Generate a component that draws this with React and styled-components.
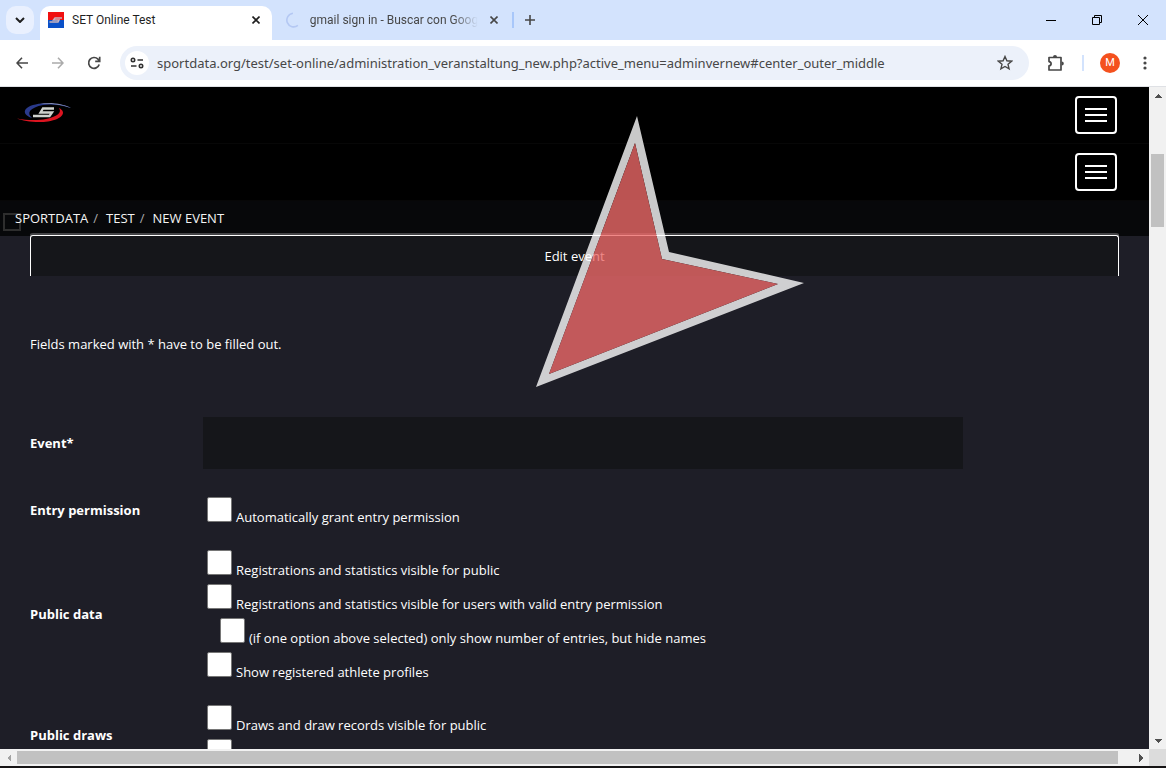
import React from 'react';
import styled, { createGlobalStyle } from 'styled-components';

const GlobalStyle = createGlobalStyle`
  * {
    box-sizing: border-box;
  }

  body {
    margin: 0;
    overflow: hidden;
    font-family: 'Open Sans', 'Noto Sans', sans-serif;
    font-size: 13px;
    color: #fff;
  }

  button {
    padding: 0;
    border: none;
    background: none;
    color: inherit;
    font: inherit;
  }
`;

const Window = styled.div`
  display: flex;
  flex-direction: column;
  height: 100vh;
  background: #161415;
`;

/* Browser chrome */

const TabStrip = styled.div`
  display: flex;
  align-items: flex-end;
  height: 40px;
  background: #d3e3fd;
  color: #1f1f1f;
  font-family: Roboto, 'Open Sans', sans-serif;
  font-size: 12px;
`;

const TabSearch = styled.button`
  display: flex;
  align-items: center;
  justify-content: center;
  width: 28px;
  height: 28px;
  margin: 0 6px 6px;
  border-radius: 10px;
  background: #e9f0fe;
`;

const Tab = styled.div`
  display: flex;
  align-items: center;
  gap: 8px;
  width: ${(props) => (props.$active ? '232px' : '240px')};
  height: 34px;
  padding: ${(props) => (props.$active ? '0 8px 6px 8px' : '0 10px 6px 14px')};
  border-radius: 10px 10px 0 0;
  background: ${(props) => (props.$active ? '#fff' : 'transparent')};
  color: ${(props) => (props.$active ? '#1f1f1f' : '#474747')};
`;

const TabTitle = styled.span`
  flex: 1;
  white-space: nowrap;
  line-height: 16px;
  mask-image: ${(props) => (props.$fade ? 'linear-gradient(90deg, #000 85%, transparent)' : 'none')};
`;

const IconButton = styled.button`
  display: flex;
  align-items: center;
  justify-content: center;
  width: ${(props) => props.$size || 16}px;
  height: ${(props) => props.$size || 16}px;
`;

const TabDivider = styled.div`
  width: 2px;
  height: 16px;
  margin-bottom: 12px;
  background: #a8c7fa;
`;

const NewTab = styled(IconButton)`
  margin: 0 0 12px 8px;
`;

const WindowControls = styled.div`
  display: flex;
  margin-left: auto;
`;

const WindowControl = styled.button`
  display: flex;
  align-items: center;
  justify-content: center;
  width: 46px;
  height: 40px;
`;

const Toolbar = styled.div`
  display: flex;
  align-items: center;
  height: 47px;
  padding: 0 14px 0 11px;
  border-bottom: 1px solid #dfe1e5;
  background: #fff;
  color: #474747;
`;

const NavButtons = styled.div`
  display: flex;
  gap: 14px;
`;

const AddressBar = styled.div`
  display: flex;
  flex: 1;
  align-items: center;
  gap: 8px;
  height: 34px;
  margin: 0 16px 0 15px;
  padding: 0 12px 0 5px;
  border-radius: 17px;
  background: #ecf1fa;
`;

const SiteInfo = styled(IconButton)`
  border-radius: 50%;
  background: #fff;
`;

const Url = styled.input`
  flex: 1;
  min-width: 0;
  padding: 0;
  border: none;
  outline: none;
  background: transparent;
  color: #474747;
  font: 13px 'Noto Sans', 'Open Sans', sans-serif;
`;

const ToolbarDivider = styled.div`
  width: 2px;
  height: 16px;
  margin: 0 16px 0 15px;
  background: #d3e3fd;
`;

const Avatar = styled.button`
  width: 20px;
  height: 20px;
  margin-right: 18px;
  border-radius: 50%;
  background: #f4511e;
  color: #fff;
  font: 11px/20px Roboto, sans-serif;
`;

/* Scrollable area */

const Viewport = styled.div`
  display: grid;
  flex: 1;
  grid-template-columns: 1fr 17px;
  grid-template-rows: 1fr 17px;
  min-height: 0;
  margin-bottom: 2px;
`;

const Page = styled.main`
  position: relative;
  min-height: 0;
  overflow: hidden;
  background: #1e1e27;
`;

const ScrollBar = styled.div`
  display: flex;
  flex-direction: ${(props) => (props.$horizontal ? 'row' : 'column')};
  align-items: center;
  background: #f1f1f1;
`;

const ScrollArrow = styled.button`
  display: flex;
  align-items: center;
  justify-content: center;
  width: 17px;
  height: 17px;
`;

const ScrollTrack = styled.div`
  display: flex;
  flex: 1;
  flex-direction: ${(props) => (props.$horizontal ? 'row' : 'column')};
  align-self: stretch;
  padding: ${(props) => (props.$horizontal ? '2px 0' : '50px 2px 0')};
`;

const ScrollThumb = styled.div`
  flex: ${(props) => props.$size};
  background: #c1c1c1;
`;

const ScrollCorner = styled.div`
  background: #dcdcdc;
`;

/* Page */

const HeaderRow = styled.header`
  display: flex;
  align-items: center;
  justify-content: space-between;
  height: 57px;
  padding: 0 32px 0 16px;
  border-bottom: 1px solid #070707;
  background: #000;
`;

const Logo = styled.a`
  display: flex;
  margin-bottom: 4px;
`;

const MenuButton = styled.button`
  display: flex;
  flex-direction: column;
  align-items: center;
  justify-content: center;
  gap: 4px;
  width: 42px;
  height: 38px;
  margin-left: auto;
  border: 2px solid #fff;
  border-radius: 4px;
`;

const MenuLine = styled.span`
  width: 22px;
  height: 2px;
  background: #fff;
`;

const Breadcrumb = styled.nav`
  position: relative;
  display: flex;
  height: 35px;
  padding: 0 15px;
  background: #07080a;
  line-height: 34px;
  font-weight: 500;
  text-transform: uppercase;
`;

const Crumb = styled.a`
  z-index: 1;
  color: #f4f4f4;
  text-decoration: none;

  & + &::before {
    content: '/';
    padding: 0 8px 0 5px;
    color: #aaa;
  }
`;

const CrumbBox = styled.span`
  position: absolute;
  top: 12px;
  left: 3px;
  width: 18px;
  height: 18px;
  border: 2px solid #2e2e2e;
`;

const Content = styled.div`
  padding: 0 30px;
`;

const EditTab = styled.button`
  display: block;
  width: 100%;
  height: 41px;
  margin-top: -1px;
  border: 1px solid #fff;
  border-bottom: none;
  border-radius: 3px 3px 0 0;
  background: #15161a;
  box-shadow: 0 -1px 0 1px #444447;
  clip-path: inset(-2px 0 0 0);
  color: #fff;
`;

const Notice = styled.p`
  margin: 58px 0 63px;
  line-height: 20px;
`;

const EventForm = styled.form`
  display: flex;
  flex-direction: column;
  gap: 28px;
`;

const Field = styled.div`
  display: grid;
  grid-template-columns: 173px 1fr;
  align-items: center;
`;

const FieldLabel = styled.label`
  font-weight: 700;
  line-height: 20px;
`;

const TextInput = styled.input`
  width: 83%;
  height: 52px;
  padding: 0 16px;
  border: none;
  background: #15161a;
  color: #fff;
  font: inherit;
`;

const Options = styled.div`
  display: flex;
  flex-direction: column;
  gap: 9px;
  padding-left: 4px;
`;

const Option = styled.label`
  display: flex;
  align-items: baseline;
  gap: 4px;
  height: 25px;
  padding-left: ${(props) => (props.$nested ? '13px' : '0')};
  line-height: 18px;
`;

const Checkbox = styled.input`
  appearance: none;
  flex: none;
  width: 25px;
  height: 25px;
  margin: 0;
  border: 1px solid #767676;
  border-radius: 2px;
  background: #fff;
`;

const Pointer = styled.svg`
  position: absolute;
  top: 28px;
  left: calc(50% - 40px);
  opacity: 0.79;
  pointer-events: none;
`;

const CloseIcon = () => (
  <svg width="8" height="8" viewBox="0 0 8 8" stroke="currentColor" strokeWidth="1.6">
    <path d="M.5 .5l7 7M7.500 .5l-7 7" />
  </svg>
);

const Favicon = () => (
  <svg width="16" height="16" viewBox="0 0 16 16">
    <path fill="#f01010" d="M0 0h16v8H0z" />
    <path fill="#0a50c8" d="M0 8h16v8H0z" />
    <path d="M14 6H7L5.500 8H11l-1 2H1.500" fill="none" stroke="#c9b4bf" strokeWidth="1.5" />
  </svg>
);

const SportdataLogo = () => (
  <svg width="56" height="22" viewBox="0 0 56 22">
    <path fill="#2a3a8c" d="M16 16C4 12 7 3 26 1.500C38 0.500 50 3 55 6C44 2.500 34 1.700 27 3C14 5.500 10 11 16 16Z" />
    <path fill="#8b94b8" d="M24 1.600C36 0 49 2.500 55 6C45 2.500 35 1.500 24 1.600Z" />
    <path fill="#dc1420" d="M43 6C51 10 47 17 32 19.500C20 21 7 19 1 16.500C11 18.500 22 18.500 30 17C42 14.500 46 10.500 43 6Z" />
    <path fill="none" stroke="#cfd2ce" strokeWidth="2.300" d="M38 6.500H27L24.500 10.500H36L33.500 14H17" />
  </svg>
);

const arrowPaths = {
  up: 'M0 4L4 0L8 4Z',
  down: 'M0 0L4 4L8 0Z',
  left: 'M4 0L0 4L4 8Z',
  right: 'M0 0L4 4L0 8Z',
};

const Arrow = ({ direction, color = '#505050' }) => {
  const vertical = direction === 'up' || direction === 'down';
  return (
    <svg width={vertical ? 8 : 4} height={vertical ? 4 : 8} fill={color} shapeRendering="crispEdges">
      <path d={arrowPaths[direction]} />
    </svg>
  );
};

const BrowserTabs = () => (
  <TabStrip>
    <TabSearch aria-label="Search tabs">
      <svg width="10" height="6" viewBox="0 0 10 6" fill="none" stroke="currentColor" strokeWidth="2">
        <path d="M1 1l4 4 4-4" />
      </svg>
    </TabSearch>
    <Tab $active>
      <Favicon />
      <TabTitle>SET Online Test</TabTitle>
      <IconButton aria-label="Close tab"><CloseIcon /></IconButton>
    </Tab>
    <Tab>
      <svg width="16" height="16" viewBox="0 0 16 16" fill="none" stroke="#b4c8f3" strokeWidth="1.6">
        <path d="M7 1.200A6.900 6.900 0 1 0 12 13.500" />
      </svg>
      <TabTitle $fade>gmail sign in - Buscar con Goog</TabTitle>
      <IconButton aria-label="Close tab"><CloseIcon /></IconButton>
    </Tab>
    <TabDivider />
    <NewTab aria-label="New tab">
      <svg width="10" height="10" viewBox="0 0 10 10" stroke="#474747" strokeWidth="1.6">
        <path d="M5 0v10M0 5h10" />
      </svg>
    </NewTab>
    <WindowControls>
      <WindowControl aria-label="Minimize">
        <svg width="10" height="10" stroke="#000"><path d="M0 5.500h10" /></svg>
      </WindowControl>
      <WindowControl aria-label="Restore">
        <svg width="10" height="10" fill="none" stroke="#000">
          <path d="M.5 2.500h7v7h-7zM2.500 2.500v-2h7v7h-2" />
        </svg>
      </WindowControl>
      <WindowControl aria-label="Close">
        <svg width="10" height="10" stroke="#000"><path d="M0 0l10 10M10 0L0 10" /></svg>
      </WindowControl>
    </WindowControls>
  </TabStrip>
);

const BrowserToolbar = () => (
  <Toolbar>
    <NavButtons>
      <IconButton $size={22} aria-label="Back">
        <svg width="12" height="12" viewBox="0 0 12 12" fill="none" stroke="#474747" strokeWidth="1.6">
          <path d="M12 6H1M6 .8L1 6l5 5.200" />
        </svg>
      </IconButton>
      <IconButton $size={22} aria-label="Forward">
        <svg width="12" height="12" viewBox="0 0 12 12" fill="none" stroke="#ababab" strokeWidth="1.6">
          <path d="M0 6h11M6 .8L11 6l-5 5.200" />
        </svg>
      </IconButton>
      <IconButton $size={22} aria-label="Reload">
        <svg width="14" height="14" viewBox="0 0 14 14" fill="none" stroke="#474747" strokeWidth="1.7">
          <path d="M12.200 8.500A5.400 5.400 0 1 1 11 3.200L12.500 5M12.700 .8V5.300H8.200" />
        </svg>
      </IconButton>
    </NavButtons>
    <AddressBar>
      <SiteInfo $size={24} aria-label="Site information">
        <svg width="14" height="12" viewBox="0 0 14 12" fill="none" stroke="#303030" strokeWidth="1.6">
          <circle cx="3" cy="3" r="1.700" />
          <path d="M7.500 3H13M1 9h5.500" />
          <circle cx="11" cy="9" r="1.700" />
        </svg>
      </SiteInfo>
      <Url
        aria-label="Address"
        defaultValue="sportdata.org/test/set-online/administration_veranstaltung_new.php?active_menu=adminvernew#center_outer_middle"
      />
      <IconButton $size={24} aria-label="Bookmark this page">
        <svg width="16" height="16" viewBox="0 0 16 16" fill="none" stroke="#474747" strokeWidth="1.4">
          <path d="M8 1.500l1.900 4.300 4.700.4-3.600 3.100 1.100 4.600L8 11.500l-4.100 2.400L5 9.300 1.400 6.200l4.700-.4z" />
        </svg>
      </IconButton>
    </AddressBar>
    <IconButton $size={22} aria-label="Extensions">
      <svg width="18" height="18" viewBox="0 0 18 18" fill="none" stroke="#474747" strokeWidth="1.7">
        <path d="M2 3.500h12V16H2v-4.200c2.800-.3 2.800-3.900 0-4.200z" strokeLinejoin="round" />
        <path d="M6 3a2 2 0 0 1 4 0zM14.800 7.600a2 2 0 0 1 0 4z" fill="#474747" stroke="none" />
      </svg>
    </IconButton>
    <ToolbarDivider />
    <Avatar>M</Avatar>
    <IconButton $size={14} aria-label="More">
      <svg width="4" height="14" fill="#474747">
        <circle cx="2" cy="2" r="1.600" />
        <circle cx="2" cy="7" r="1.600" />
        <circle cx="2" cy="12" r="1.600" />
      </svg>
    </IconButton>
  </Toolbar>
);

const Hamburger = ({ label }) => (
  <MenuButton aria-label={label}>
    <MenuLine />
    <MenuLine />
    <MenuLine />
  </MenuButton>
);

const CheckOption = ({ nested, children, ...rest }) => (
  <Option $nested={nested}>
    <Checkbox type="checkbox" {...rest} />
    {children}
  </Option>
);

const App = () => {
  return (
    <Window>
      <GlobalStyle />
      <BrowserTabs />
      <BrowserToolbar />
      <Viewport>
        <Page>
          <HeaderRow>
            <Logo href="#" aria-label="Sportdata"><SportdataLogo /></Logo>
            <Hamburger label="Main menu" />
          </HeaderRow>
          <HeaderRow as="div">
            <Hamburger label="User menu" />
          </HeaderRow>
          <Breadcrumb>
            <CrumbBox />
            <Crumb href="#">Sportdata</Crumb>
            <Crumb href="#">Test</Crumb>
            <Crumb href="#">New event</Crumb>
          </Breadcrumb>
          <Content>
            <EditTab>Edit event</EditTab>
            <Notice>Fields marked with * have to be filled out.</Notice>
            <EventForm>
              <Field>
                <FieldLabel htmlFor="event">Event*</FieldLabel>
                <TextInput id="event" type="text" />
              </Field>
              <Field role="group" aria-labelledby="entry">
                <FieldLabel as="span" id="entry">Entry permission</FieldLabel>
                <Options>
                  <CheckOption>Automatically grant entry permission</CheckOption>
                </Options>
              </Field>
              <Field role="group" aria-labelledby="data">
                <FieldLabel as="span" id="data">Public data</FieldLabel>
                <Options>
                  <CheckOption>Registrations and statistics visible for public</CheckOption>
                  <CheckOption>Registrations and statistics visible for users with valid entry permission</CheckOption>
                  <CheckOption nested>(if one option above selected) only show number of entries, but hide names</CheckOption>
                  <CheckOption>Show registered athlete profiles</CheckOption>
                </Options>
              </Field>
              <Field role="group" aria-labelledby="draws">
                <FieldLabel as="span" id="draws">Public draws</FieldLabel>
                <Options>
                  <CheckOption>Draws and draw records visible for public</CheckOption>
                  <CheckOption aria-label="Draws visible for users with valid entry permission" />
                </Options>
              </Field>
            </EventForm>
          </Content>
          <Pointer width="270" height="274" viewBox="0 0 270 274">
            <path fill="#fff" fillRule="evenodd" d="M102 1L134 137L269 168L1 272ZM100 28L14 259L243 169L127 144Z" />
            <path fill="#ee6a69" d="M100 28L14 259L243 169L127 144Z" />
          </Pointer>
        </Page>
        <ScrollBar>
          <ScrollArrow aria-label="Scroll up"><Arrow direction="up" /></ScrollArrow>
          <ScrollTrack>
            <ScrollThumb $size="0 0 73px" />
          </ScrollTrack>
          <ScrollArrow aria-label="Scroll down"><Arrow direction="down" /></ScrollArrow>
        </ScrollBar>
        <ScrollBar $horizontal>
          <ScrollArrow aria-label="Scroll left"><Arrow direction="left" color="#a3a3a3" /></ScrollArrow>
          <ScrollTrack $horizontal>
            <ScrollThumb $size="0 0 calc(100% - 14px)" />
          </ScrollTrack>
          <ScrollArrow aria-label="Scroll right"><Arrow direction="right" /></ScrollArrow>
        </ScrollBar>
        <ScrollCorner />
      </Viewport>
    </Window>
  );
};

export default App;
